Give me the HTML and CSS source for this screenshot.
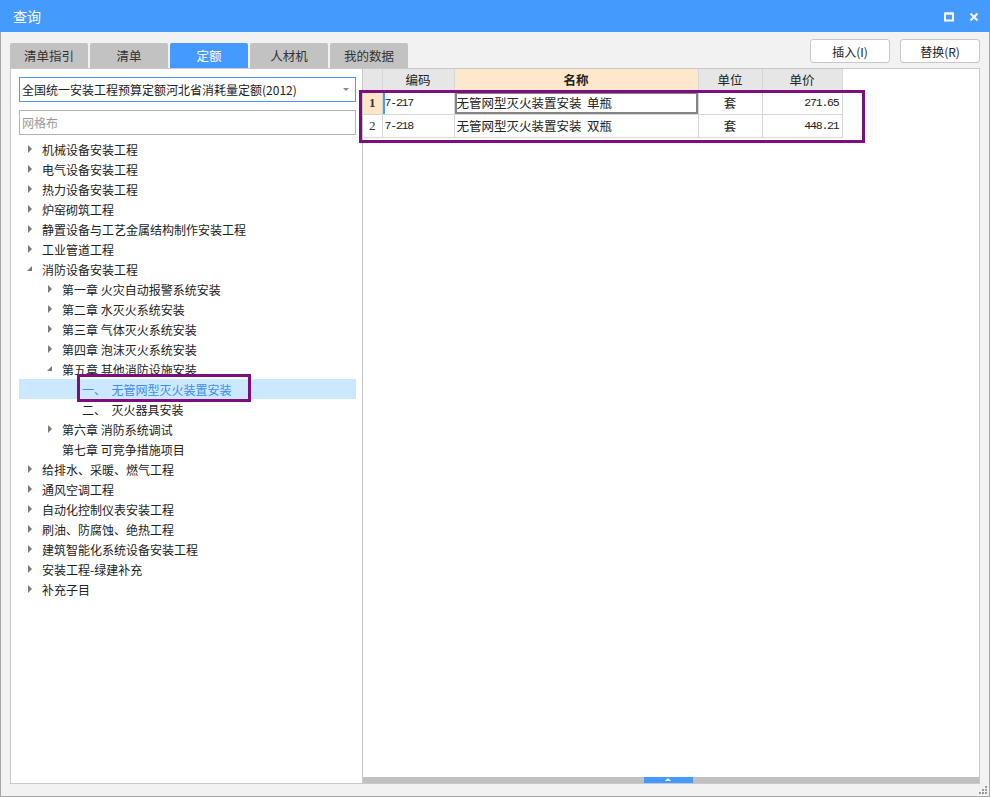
FILE: index.html
```html
<!DOCTYPE html>
<html lang="zh-CN">
<head>
	<meta charset="UTF-8">
	<title>查询</title>
	<link rel="stylesheet" href="styles.css">
</head>
<body>
	<div class="window">
		<div class="titlebar">
			<span class="title">查询</span>
			<div class="winbtns">
				<svg width="10" height="10" viewBox="0 0 10 10"><rect x="1" y="1.5" width="8" height="7" fill="none" stroke="#fff" stroke-width="2"/><rect x="1" y="0.5" width="8" height="2" fill="#fff"/></svg>
				<svg width="10" height="10" viewBox="0 0 10 10"><path d="M1.5 1.5L8.5 8.5M8.5 1.5L1.5 8.5" stroke="#fff" stroke-width="2"/></svg>
			</div>
		</div>
		<div class="main">
			<div class="toolbar">
				<div class="tabs">
					<span class="tab">清单指引</span>
					<span class="tab">清单</span>
					<span class="tab current">定额</span>
					<span class="tab">人材机</span>
					<span class="tab">我的数据</span>
				</div>
				<div class="actions">
					<button class="btn">插入(I)</button>
					<button class="btn">替换(R)</button>
				</div>
			</div>
			<div class="panels">
				<div class="left">
					<div class="select">
						<span>全国统一安装工程预算定额河北省消耗量定额(2012)</span>
						<i class="caret"></i>
					</div>
					<div class="search">网格布</div>
					<ul class="tree">
						<li class="lv0"><i class="arr"></i>机械设备安装工程</li>
						<li class="lv0"><i class="arr"></i>电气设备安装工程</li>
						<li class="lv0"><i class="arr"></i>热力设备安装工程</li>
						<li class="lv0"><i class="arr"></i>炉窑砌筑工程</li>
						<li class="lv0"><i class="arr"></i>静置设备与工艺金属结构制作安装工程</li>
						<li class="lv0"><i class="arr"></i>工业管道工程</li>
						<li class="lv0"><i class="arr open"></i>消防设备安装工程</li>
						<li class="lv1"><i class="arr"></i>第一章 火灾自动报警系统安装</li>
						<li class="lv1"><i class="arr"></i>第二章 水灭火系统安装</li>
						<li class="lv1"><i class="arr"></i>第三章 气体灭火系统安装</li>
						<li class="lv1"><i class="arr"></i>第四章 泡沫灭火系统安装</li>
						<li class="lv1"><i class="arr open"></i>第五章 其他消防设施安装</li>
						<li class="lv2 sel"><i class="arr none"></i>一、&nbsp;&nbsp;无管网型灭火装置安装<b class="mark"></b></li>
						<li class="lv2"><i class="arr none"></i>二、&nbsp;&nbsp;灭火器具安装</li>
						<li class="lv1"><i class="arr"></i>第六章 消防系统调试</li>
						<li class="lv1"><i class="arr none"></i>第七章 可竞争措施项目</li>
						<li class="lv0"><i class="arr"></i>给排水、采暖、燃气工程</li>
						<li class="lv0"><i class="arr"></i>通风空调工程</li>
						<li class="lv0"><i class="arr"></i>自动化控制仪表安装工程</li>
						<li class="lv0"><i class="arr"></i>刷油、防腐蚀、绝热工程</li>
						<li class="lv0"><i class="arr"></i>建筑智能化系统设备安装工程</li>
						<li class="lv0"><i class="arr"></i>安装工程-绿建补充</li>
						<li class="lv0"><i class="arr"></i>补充子目</li>
					</ul>
				</div>
				<div class="right">
					<div class="grid-area">
						<table class="grid">
							<tr>
								<th class="c-no"></th>
								<th class="c-code">编码</th>
								<th class="c-name hl">名称</th>
								<th class="c-unit">单位</th>
								<th class="c-price">单价</th>
							</tr>
							<tr>
								<td class="no cur">1</td>
								<td class="code focus">7-217</td>
								<td class="name edit">无管网型灭火装置安装&nbsp;&nbsp;单瓶</td>
								<td class="unit">套</td>
								<td class="price">271.65</td>
							</tr>
							<tr>
								<td class="no">2</td>
								<td class="code">7-218</td>
								<td class="name">无管网型灭火装置安装&nbsp;&nbsp;双瓶</td>
								<td class="unit">套</td>
								<td class="price">448.21</td>
							</tr>
						</table>
						<div class="mark grid-mark"></div>
					</div>
					<div class="hscroll"><span class="thumb"></span></div>
				</div>
			</div>
		</div>
		<svg class="grip" width="9" height="9" viewBox="0 0 9 9" fill="#999">
			<rect x="6" y="0" width="2" height="2"/>
			<rect x="3" y="3" width="2" height="2"/><rect x="6" y="3" width="2" height="2"/>
			<rect x="0" y="6" width="2" height="2"/><rect x="3" y="6" width="2" height="2"/><rect x="6" y="6" width="2" height="2"/>
		</svg>
	</div>
</body>
</html>
```

FILE: styles.css
```css
* {
	margin: 0;
	padding: 0;
	box-sizing: border-box;
}
body {
	width: 990px;
	height: 797px;
	font-family: "Noto Sans CJK SC", "Noto Sans", sans-serif;
	font-size: 12px;
	color: #222;
	overflow: hidden;
}
.window {
	position: relative;
	width: 990px;
	height: 797px;
	background-color: #f2f2f2;
	border: 1px solid #a6a6a6;
	border-top: none;
	display: flex;
	flex-direction: column;
}
.titlebar {
	height: 32px;
	margin: 0 -1px;
	background-color: #459bfd;
	color: #fff;
	display: flex;
	align-items: center;
	justify-content: space-between;
	padding: 0 11px 0 13px;
}
.title {
	font-size: 14px;
}
.winbtns {
	display: flex;
	gap: 15px;
	padding-top: 1px;
}
.main {
	flex: 1;
	padding: 0 9px;
	display: flex;
	flex-direction: column;
}
.toolbar {
	height: 36px;
	display: flex;
	justify-content: space-between;
	align-items: flex-end;
}
.tabs {
	display: flex;
	gap: 2px;
}
.tab {
	width: 78px;
	height: 25px;
	line-height: 25px;
	text-align: center;
	background-color: #c2c2c2;
	color: #333;
	border-radius: 2px 2px 0 0;
	font-size: 12.5px;
}
.tab.current {
	background-color: #449aff;
	color: #fff;
}
.actions {
	display: flex;
	gap: 10px;
	margin-bottom: 5px;
}
.btn {
	width: 80px;
	height: 24px;
	background-color: #fff;
	border: 1px solid #c8c8c8;
	border-radius: 3px;
	font-family: inherit;
	font-size: 12px;
	color: #222;
}
.panels {
	height: 716px;
	display: flex;
}
.left {
	width: 352px;
	background-color: #fff;
	border: 1px solid #c8c8c8;
	border-right: none;
	padding: 8px 6px 0 8px;
}
.select {
	height: 25px;
	border: 1px solid #449aff;
	display: flex;
	align-items: center;
	justify-content: space-between;
	padding: 0 6px 0 2px;
	font-size: 12px;
}
.caret {
	width: 0;
	height: 0;
	border-left: 3.5px solid transparent;
	border-right: 3.5px solid transparent;
	border-top: 3.5px solid #8a8a8a;
}
.search {
	height: 25px;
	margin-top: 8px;
	border: 1px solid #b4b4b4;
	color: #9a9a9a;
	padding-left: 2px;
	line-height: 23px;
}
.tree {
	list-style: none;
	margin-top: 4px;
}
.tree li {
	position: relative;
	height: 20px;
	display: flex;
	align-items: center;
	white-space: nowrap;
	color: #222;
}
.tree .lv0 {
	padding-left: 8px;
}
.tree .lv1 {
	padding-left: 28px;
}
.tree .lv2 {
	padding-left: 48px;
}
.arr {
	width: 15px;
	height: 20px;
	position: relative;
	flex-shrink: 0;
}
.arr::before {
	content: "";
	position: absolute;
	left: 1px;
	top: 6px;
	border-top: 4px solid transparent;
	border-bottom: 4px solid transparent;
	border-left: 4px solid #7a7a7a;
}
.arr.open::before {
	left: 0;
	top: 7px;
	border-top: none;
	border-left: 5px solid transparent;
	border-bottom: 5px solid #7a7a7a;
}
.arr.none::before {
	display: none;
}
.tree .sel {
	background-color: #cce8ff;
	color: #3a8ef2;
}
.mark {
	position: absolute;
	border: 3px solid #7d0d80;
}
.tree .mark {
	left: 58px;
	top: -5px;
	width: 174px;
	height: 28px;
}
.right {
	flex: 1;
	background-color: #fff;
	border: 1px solid #c8c8c8;
	display: flex;
	flex-direction: column;
}
.grid-area {
	position: relative;
	flex: 1;
}
.grid {
	border-collapse: collapse;
	table-layout: fixed;
}
.grid th,
.grid td {
	border: 1px solid #d6d6d6;
	white-space: nowrap;
	overflow: hidden;
}
.grid th {
	height: 22px;
	background-color: #e6e6e6;
	font-weight: normal;
	font-size: 12.5px;
	border-top: none;
}
.grid th.c-no {
	border-left: none;
}
.grid th.hl {
	background-color: #fde8cc;
	font-weight: bold;
}
.c-no { width: 19px; }
.c-code { width: 72px; }
.c-name { width: 244px; }
.c-unit { width: 64px; }
.c-price { width: 80px; }
.grid td {
	height: 23px;
	padding: 0 2px;
}
.grid td.no {
	border-left: none;
	text-align: center;
	font-family: "Liberation Serif", serif;
	font-size: 13px;
	color: #333;
}
.grid td.no.cur {
	background-color: #fde5c8;
	font-weight: bold;
}
.grid td.code,
.grid td.price {
	font-family: "Liberation Mono", monospace;
	font-size: 11.5px;
	letter-spacing: -1.2px;
}
.grid td.focus {
	box-shadow: inset 2px 0 0 #449aff;
}
.grid td.edit {
	box-shadow: inset 0 0 0 2px #858585;
}
.grid td.name {
	font-size: 12.5px;
}
.grid td.unit {
	text-align: center;
	font-size: 12.5px;
}
.grid td.price {
	text-align: right;
	padding-right: 3px;
}
.grid-mark {
	left: -4px;
	top: 21px;
	width: 506px;
	height: 53px;
}
.hscroll {
	height: 6px;
	background-color: #c0c0c0;
	display: flex;
	justify-content: center;
	padding-right: 6px;
}
.thumb {
	width: 49px;
	height: 6px;
	background-color: #449aff;
	position: relative;
}
.thumb::before {
	content: "";
	position: absolute;
	left: 21px;
	top: 1px;
	border-left: 3px solid transparent;
	border-right: 3px solid transparent;
	border-bottom: 3px solid #fff;
}
.grip {
	position: absolute;
	right: 1px;
	bottom: 1px;
}
```
